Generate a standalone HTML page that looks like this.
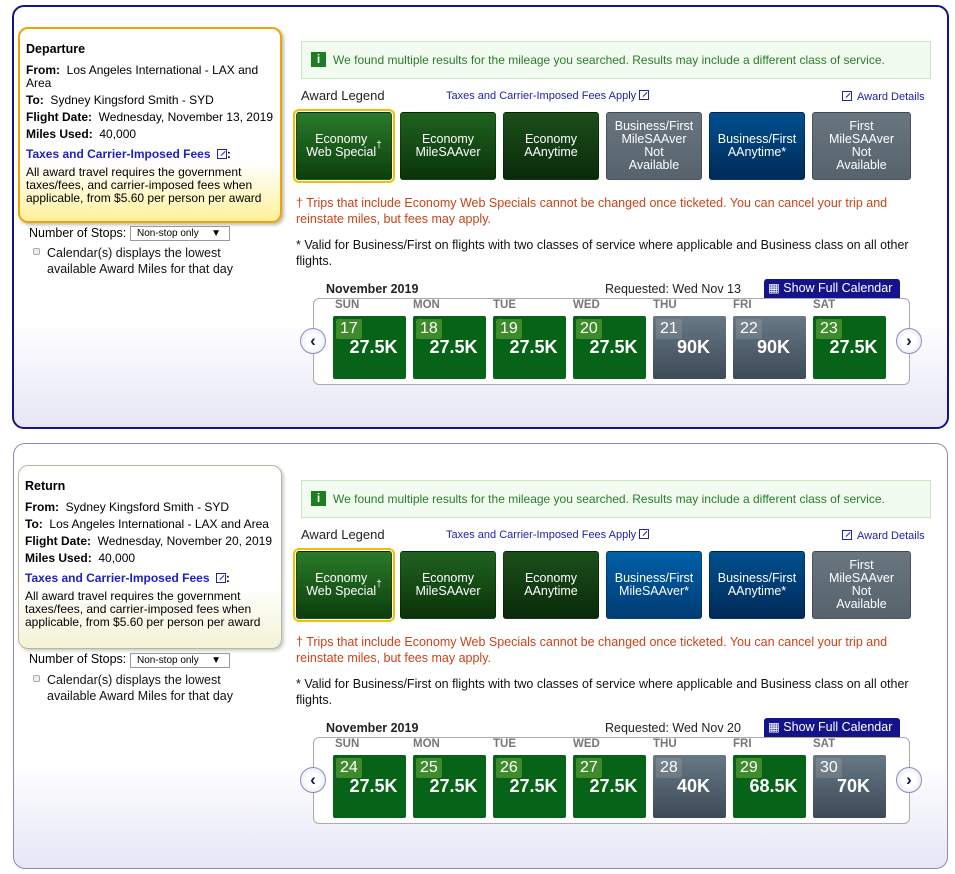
<!DOCTYPE html>
<html><head><meta charset="utf-8">
<style>
*{box-sizing:border-box;margin:0;padding:0}
body{width:955px;height:874px;background:#fff;font-family:"Liberation Sans",Arial,sans-serif;font-size:12px;color:#000;position:relative;overflow:hidden}
.panel{position:absolute;border-radius:12px;background:linear-gradient(#fff 0%,#fff 75%,#e6e6f6 100%)}
.p1{left:12px;top:5px;width:937px;height:424px;border:2px solid #141489}
.p2{left:13px;top:443px;width:935px;height:426px;border:1px solid #8a8ab8}
.sum{position:absolute;left:18px;width:264px;border-radius:10px;padding:14px 0 0 6px;line-height:13px}
.sum>div{margin-bottom:4px}
.s1{top:27px;height:196px;border:2px solid #f3a300;background:linear-gradient(#fff 0%,#fff 70%,#fff19a 100%);box-shadow:2px 2px 3px #bbb}
.s2{top:465px;height:184px;border:1px solid #b7b7a0;background:linear-gradient(#fff 0%,#fff 65%,#f3f3d6 100%);box-shadow:2px 2px 3px #ccc}
.sum b{font-weight:bold}
.sum .h{font-size:12.5px;font-weight:bold;margin-bottom:8px}
.sum .lk{color:#1f1fbf;font-weight:bold;margin-top:7px;margin-bottom:5px}
.sum .sm{line-height:13px}
.stops{position:absolute;left:29px;font-size:12.5px}
.sel{position:absolute;left:130px;width:100px;height:15px;border:1px solid #999;font-size:10px;padding-left:6px;line-height:13px;background:#fff}
.sel:after{content:"▼";position:absolute;right:8px;top:0;font-size:10px}
.bul{position:absolute;left:33px;width:7px;height:7px;border:1px solid #aaa;border-radius:2px;background:#eee}
.calt{position:absolute;left:47px;font-size:12.5px;line-height:16px;color:#111}
.info{position:absolute;left:301px;width:630px;height:38px;background:#f1fbef;border:1px solid #c9e8c2;color:#2b7b2b;font-size:12px;line-height:36px;padding-left:31px}
.info i{position:absolute;left:9px;top:10px;width:15px;height:15px;background:#1c7d22;color:#fff;font-style:normal;font-weight:bold;font-size:12px;line-height:15px;text-align:center}
.leg{position:absolute;left:301px;font-size:13px;color:#222}
.tx{position:absolute;left:446px;font-size:11px;color:#2222aa}
.ad{position:absolute;left:842px;font-size:11px;color:#2222aa}
.ico{display:inline-block;width:10px;height:10px;border:1px solid #2222aa;vertical-align:-1px;margin-left:3px;position:relative}
.ico:after{content:"";position:absolute;left:2px;top:3px;width:6px;height:1px;background:#2222aa;transform:rotate(-45deg)}
.t{position:absolute;width:96px;height:68px;border-radius:3px;color:#fff;font-size:12.5px;line-height:13px;text-align:center;display:flex;align-items:center;justify-content:center;border:1px solid rgba(0,0,0,.25)}
.g1{background:linear-gradient(#2a7a2a,#0c3e0c)}
.g2{background:linear-gradient(#1f621f,#0a330a)}
.g3{background:linear-gradient(#1b4f1b,#0a2a0a)}
.gr{background:linear-gradient(#69757f,#56626c)}
.bl{background:linear-gradient(#0060a8,#003c74)}
.bd{background:linear-gradient(#00508f,#002a58)}
.sel1{outline:2px solid #f3c000;outline-offset:1px}
.note{position:absolute;left:296px;font-size:12.5px;line-height:16px;color:#c9431a;width:630px}
.note2{position:absolute;left:296px;font-size:12.5px;line-height:16px;color:#111;width:650px}
.mon{position:absolute;left:326px;font-size:12.5px;font-weight:bold;color:#222}
.req{position:absolute;left:605px;font-size:12.5px;color:#222}
.sfc{position:absolute;left:764px;width:136px;height:19px;background:#14148a;color:#fff;font-size:12.5px;line-height:18px;padding-left:4px;border-radius:3px 3px 0 0}
.cal{position:absolute;left:313px;width:597px;height:87px;border:1px solid #aaa;border-radius:6px;background:#fff}
.dh{position:absolute;font-size:11.5px;color:#777;font-weight:bold}
.c{position:absolute;width:73px;height:63px;border-radius:2px;color:#fff}
.cg{background:#066318}
.cs{background:linear-gradient(#687884,#3d4a58)}
.c .d{position:absolute;left:3px;top:3px;padding:0 4px;height:20px;font-size:16px;line-height:20px;border-radius:2px}
.cg .d{background:#3e8b2c}
.cs .d{background:rgba(255,255,255,.12)}
.c .m{position:absolute;left:0;width:73px;top:21px;text-align:center;font-size:18px;font-weight:bold;padding-left:8px}
.arr{position:absolute;width:26px;height:26px;border-radius:50%;border:1px solid #8890c0;background:radial-gradient(#fff 40%,#dde 100%);color:#0d1a5c;font-weight:bold;font-size:17px;line-height:23px;text-align:center}
</style></head><body>

<div class="panel p1"></div>
<div class="panel p2"></div>

<div class="sum s1">
<div class="h">Departure</div>
<div><b>From:</b>&nbsp; Los Angeles International - LAX and<br>Area</div>
<div><b>To:</b>&nbsp; Sydney Kingsford Smith - SYD</div>
<div><b>Flight Date:</b>&nbsp; Wednesday, November 13, 2019</div>
<div><b>Miles Used:</b>&nbsp; 40,000</div>
<div class="lk">Taxes and Carrier-Imposed Fees <span class="ico"></span><span style="color:#000">:</span></div>
<div class="sm">All award travel requires the government taxes/fees, and carrier-imposed fees when applicable, from $5.60 per person per award</div>
</div>
<div class="stops" style="top:226px">Number of Stops:</div>
<div class="sel" style="top:226px">Non-stop only</div>
<div class="bul" style="top:248px"></div>
<div class="calt" style="top:245px">Calendar(s) displays the lowest<br>available Award Miles for that day</div>

<div class="sum s2">
<div class="h">Return</div>
<div><b>From:</b>&nbsp; Sydney Kingsford Smith - SYD</div>
<div><b>To:</b>&nbsp; Los Angeles International - LAX and Area</div>
<div><b>Flight Date:</b>&nbsp; Wednesday, November 20, 2019</div>
<div><b>Miles Used:</b>&nbsp; 40,000</div>
<div class="lk">Taxes and Carrier-Imposed Fees <span class="ico"></span><span style="color:#000">:</span></div>
<div class="sm">All award travel requires the government taxes/fees, and carrier-imposed fees when applicable, from $5.60 per person per award</div>
</div>
<div class="stops" style="top:652px">Number of Stops:</div>
<div class="sel" style="top:653px">Non-stop only</div>
<div class="bul" style="top:675px"></div>
<div class="calt" style="top:672px">Calendar(s) displays the lowest<br>available Award Miles for that day</div>

<div class="info" style="top:41px"><i>i</i>We found multiple results for the mileage you searched. Results may include a different class of service.</div>
<div class="leg" style="top:88px">Award Legend</div>
<div class="tx" style="top:90px">Taxes and Carrier-Imposed Fees Apply<span class="ico"></span></div>
<div class="ad" style="top:91px"><span class="ico" style="margin:0 5px 0 0"></span>Award Details</div>
<div class="t g1 sel1" style="left:296px;top:112px">Economy<br>Web Special<sup style="font-size:10px;line-height:0">†</sup></div>
<div class="t g2" style="left:400px;top:112px">Economy<br>MileSAAver</div>
<div class="t g3" style="left:503px;top:112px">Economy<br>AAnytime</div>
<div class="t gr" style="left:606px;top:112px">Business/First<br>MileSAAver<br>Not<br>Available</div>
<div class="t bd" style="left:709px;top:112px">Business/First<br>AAnytime*</div>
<div class="t gr" style="left:812px;top:112px;width:99px">First<br>MileSAAver<br>Not<br>Available</div>
<div class="note" style="top:195px">† Trips that include Economy Web Specials cannot be changed once ticketed. You can cancel your trip and reinstate miles, but fees may apply.</div>
<div class="note2" style="top:237px">* Valid for Business/First on flights with two classes of service where applicable and Business class on all other flights.</div>
<div class="mon" style="top:282px">November 2019</div>
<div class="req" style="top:282px">Requested: Wed Nov 13</div>
<div class="sfc" style="top:279px">▦ Show Full Calendar</div>
<div class="cal" style="top:298px"></div>
<div class="dh" style="left:335px;top:299px">SUN</div><div class="dh" style="left:413px;top:299px">MON</div><div class="dh" style="left:493px;top:299px">TUE</div><div class="dh" style="left:573px;top:299px">WED</div><div class="dh" style="left:653px;top:299px">THU</div><div class="dh" style="left:733px;top:299px">FRI</div><div class="dh" style="left:813px;top:299px">SAT</div>
<div class="c cg" style="left:333px;top:316px"><span class="d">17</span><span class="m">27.5K</span></div>
<div class="c cg" style="left:413px;top:316px"><span class="d">18</span><span class="m">27.5K</span></div>
<div class="c cg" style="left:493px;top:316px"><span class="d">19</span><span class="m">27.5K</span></div>
<div class="c cg" style="left:573px;top:316px"><span class="d">20</span><span class="m">27.5K</span></div>
<div class="c cs" style="left:653px;top:316px"><span class="d">21</span><span class="m">90K</span></div>
<div class="c cs" style="left:733px;top:316px"><span class="d">22</span><span class="m">90K</span></div>
<div class="c cg" style="left:813px;top:316px"><span class="d">23</span><span class="m">27.5K</span></div>
<div class="arr" style="left:300px;top:328px">‹</div>
<div class="arr" style="left:896px;top:328px">›</div>

<div class="info" style="top:480px"><i>i</i>We found multiple results for the mileage you searched. Results may include a different class of service.</div>
<div class="leg" style="top:527px">Award Legend</div>
<div class="tx" style="top:529px">Taxes and Carrier-Imposed Fees Apply<span class="ico"></span></div>
<div class="ad" style="top:530px"><span class="ico" style="margin:0 5px 0 0"></span>Award Details</div>
<div class="t g1 sel1" style="left:296px;top:551px">Economy<br>Web Special<sup style="font-size:10px;line-height:0">†</sup></div>
<div class="t g2" style="left:400px;top:551px">Economy<br>MileSAAver</div>
<div class="t g3" style="left:503px;top:551px">Economy<br>AAnytime</div>
<div class="t bl" style="left:606px;top:551px">Business/First<br>MileSAAver*</div>
<div class="t bd" style="left:709px;top:551px">Business/First<br>AAnytime*</div>
<div class="t gr" style="left:812px;top:551px;width:99px">First<br>MileSAAver<br>Not<br>Available</div>
<div class="note" style="top:634px">† Trips that include Economy Web Specials cannot be changed once ticketed. You can cancel your trip and reinstate miles, but fees may apply.</div>
<div class="note2" style="top:676px">* Valid for Business/First on flights with two classes of service where applicable and Business class on all other flights.</div>
<div class="mon" style="top:721px">November 2019</div>
<div class="req" style="top:721px">Requested: Wed Nov 20</div>
<div class="sfc" style="top:718px">▦ Show Full Calendar</div>
<div class="cal" style="top:737px"></div>
<div class="dh" style="left:335px;top:738px">SUN</div><div class="dh" style="left:413px;top:738px">MON</div><div class="dh" style="left:493px;top:738px">TUE</div><div class="dh" style="left:573px;top:738px">WED</div><div class="dh" style="left:653px;top:738px">THU</div><div class="dh" style="left:733px;top:738px">FRI</div><div class="dh" style="left:813px;top:738px">SAT</div>
<div class="c cg" style="left:333px;top:755px"><span class="d">24</span><span class="m">27.5K</span></div>
<div class="c cg" style="left:413px;top:755px"><span class="d">25</span><span class="m">27.5K</span></div>
<div class="c cg" style="left:493px;top:755px"><span class="d">26</span><span class="m">27.5K</span></div>
<div class="c cg" style="left:573px;top:755px"><span class="d">27</span><span class="m">27.5K</span></div>
<div class="c cs" style="left:653px;top:755px"><span class="d">28</span><span class="m">40K</span></div>
<div class="c cg" style="left:733px;top:755px"><span class="d">29</span><span class="m">68.5K</span></div>
<div class="c cs" style="left:813px;top:755px"><span class="d">30</span><span class="m">70K</span></div>
<div class="arr" style="left:300px;top:767px">‹</div>
<div class="arr" style="left:896px;top:767px">›</div>

</body></html>
